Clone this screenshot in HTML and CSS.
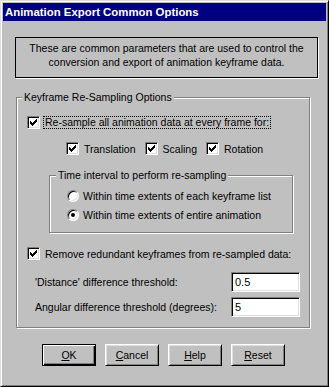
FILE: index.html
```html
<!DOCTYPE html>
<html lang="en">
<head>
    <meta charset="UTF-8">
    <title>Animation Export Common Options</title>
    <link rel="stylesheet" href="styles.css">
</head>
<body>
    <div class="window">
        <div class="titlebar">Animation Export Common Options</div>

        <div class="content">
            <div class="info">
                These are common parameters that are used to control the<br>
                conversion and export of animation keyframe data.
            </div>

            <fieldset class="group outer">
                <legend>Keyframe Re-Sampling Options</legend>

                <label class="check-row resample">
                    <span class="box"><svg width="7" height="7" viewBox="0 0 7 7" shape-rendering="crispEdges"><path d="M0 2h1v3h-1zM1 3h1v3h-1zM2 4h1v3h-1zM3 3h1v3h-1zM4 2h1v3h-1zM5 1h1v3h-1zM6 0h1v3h-1z"/></svg></span>
                    <span class="focus">Re-sample all animation data at every frame for:</span>
                </label>

                <div class="channels">
                    <label class="check-row">
                        <span class="box"><svg width="7" height="7" viewBox="0 0 7 7" shape-rendering="crispEdges"><path d="M0 2h1v3h-1zM1 3h1v3h-1zM2 4h1v3h-1zM3 3h1v3h-1zM4 2h1v3h-1zM5 1h1v3h-1zM6 0h1v3h-1z"/></svg></span>
                        <span>Translation</span>
                    </label>
                    <label class="check-row">
                        <span class="box"><svg width="7" height="7" viewBox="0 0 7 7" shape-rendering="crispEdges"><path d="M0 2h1v3h-1zM1 3h1v3h-1zM2 4h1v3h-1zM3 3h1v3h-1zM4 2h1v3h-1zM5 1h1v3h-1zM6 0h1v3h-1z"/></svg></span>
                        <span>Scaling</span>
                    </label>
                    <label class="check-row">
                        <span class="box"><svg width="7" height="7" viewBox="0 0 7 7" shape-rendering="crispEdges"><path d="M0 2h1v3h-1zM1 3h1v3h-1zM2 4h1v3h-1zM3 3h1v3h-1zM4 2h1v3h-1zM5 1h1v3h-1zM6 0h1v3h-1z"/></svg></span>
                        <span>Rotation</span>
                    </label>
                </div>

                <fieldset class="group interval">
                    <legend>Time interval to perform re-sampling</legend>
                    <label class="radio-row">
                        <span class="radio"></span>
                        <span>Within time extents of each keyframe list</span>
                    </label>
                    <label class="radio-row second">
                        <span class="radio on"></span>
                        <span>Within time extents of entire animation</span>
                    </label>
                </fieldset>

                <label class="check-row remove">
                    <span class="box"><svg width="7" height="7" viewBox="0 0 7 7" shape-rendering="crispEdges"><path d="M0 2h1v3h-1zM1 3h1v3h-1zM2 4h1v3h-1zM3 3h1v3h-1zM4 2h1v3h-1zM5 1h1v3h-1zM6 0h1v3h-1z"/></svg></span>
                    <span>Remove redundant keyframes from re-sampled data:</span>
                </label>

                <div class="field-row distance">
                    <span>'Distance' difference threshold:</span>
                    <span class="textbox">0.5</span>
                </div>
                <div class="field-row angular">
                    <span>Angular difference threshold (degrees):</span>
                    <span class="textbox">5</span>
                </div>
            </fieldset>

            <div class="buttons">
                <button class="btn default"><u>O</u>K</button>
                <button class="btn"><u>C</u>ancel</button>
                <button class="btn"><u>H</u>elp</button>
                <button class="btn"><u>R</u>eset</button>
            </div>
        </div>
    </div>
</body>
</html>
```

FILE: styles.css
```css
body {
    margin: 0;
    background: #c0c0c0;
    font-family: "Liberation Sans", Arial, sans-serif;
    font-size: 10.5px;
    color: #000;
}

.window {
    box-sizing: border-box;
    width: 329px;
    height: 387px;
    padding: 2px;
    background: #c0c0c0;
    border: 1px solid;
    border-color: #dfdfdf #000 #000 #dfdfdf;
    box-shadow: inset 1px 1px 0 #fff, inset -1px -1px 0 #808080;
}

.titlebar {
    height: 18px;
    line-height: 18px;
    padding-left: 2px;
    background: #000080;
    color: #fff;
    font-weight: bold;
    font-size: 11.4px;
    white-space: nowrap;
}

.content {
    padding-top: 16px;
}

.info {
    box-sizing: border-box;
    width: 303px;
    height: 41px;
    margin-left: 12px;
    padding-top: 3px;
    line-height: 14px;
    text-align: center;
    border: 1px solid #000;
    box-shadow: 1px 1px 0 #fff;
}

/* etched group boxes */
.group {
    box-sizing: border-box;
    margin: 0;
    border: 1px solid #808080;
    box-shadow: inset 1px 1px 0 #fff, 1px 1px 0 #fff;
    min-width: 0;
}

.group legend {
    padding: 0 2px;
    line-height: 14px;
    background: #c0c0c0;
}

.outer {
    width: 294px;
    margin: 12px 0 0 13px;
    padding: 11px 9px 10px 10px;
}

.outer > legend {
    margin-left: -5px;
}

.check-row {
    display: flex;
    align-items: center;
    height: 15px;
    white-space: nowrap;
}

.box {
    box-sizing: border-box;
    width: 13px;
    height: 13px;
    flex: none;
    display: flex;
    align-items: center;
    justify-content: center;
    margin-right: 5px;
    background: #fff;
    border: 1px solid;
    border-color: #808080 #fff #fff #808080;
    box-shadow: inset 1px 1px 0 #000, inset -1px -1px 0 #dfdfdf;
}

.box svg {
    display: block;
}

.resample .box {
    margin-right: 3px;
}

.focus {
    padding: 0 1px;
    line-height: 11px;
    border: 1px dotted #000;
}

.channels {
    display: flex;
    gap: 9px;
    margin: 11px 0 0 39px;
}

.interval {
    width: 244px;
    margin: 12px 0 0 22px;
    padding: 8px 6px 11px 17px;
}

.interval > legend {
    margin-left: -11px;
}

.radio-row {
    display: flex;
    align-items: center;
    height: 12px;
    white-space: nowrap;
}

.radio-row.second {
    margin-top: 7px;
}

.radio {
    box-sizing: border-box;
    width: 12px;
    height: 12px;
    flex: none;
    display: flex;
    align-items: center;
    justify-content: center;
    margin-right: 4px;
    border-radius: 50%;
    background: #fff;
    border: 1px solid;
    border-color: #808080 #fff #fff #808080;
    box-shadow: inset 1px 1px 0 #000, inset -1px -1px 0 #dfdfdf;
}

.radio.on::after {
    content: "";
    width: 4px;
    height: 4px;
    border-radius: 50%;
    background: #000;
}

.remove {
    margin-top: 13px;
}

.field-row {
    display: flex;
    align-items: center;
    justify-content: space-between;
    height: 20px;
    margin-left: 8px;
}

.distance {
    margin-top: 11px;
}

.angular {
    margin-top: 5px;
}

.textbox {
    box-sizing: border-box;
    width: 69px;
    height: 20px;
    padding: 3px 0 0 3px;
    line-height: 13px;
    font-size: 11px;
    background: #fff;
    border: 1px solid;
    border-color: #808080 #fff #fff #808080;
    box-shadow: inset 1px 1px 0 #000, inset -1px -1px 0 #dfdfdf;
}

.buttons {
    display: flex;
    gap: 9px;
    margin-top: 16px;
    padding-left: 39px;
}

.btn {
    box-sizing: border-box;
    width: 54px;
    height: 22px;
    padding: 0;
    font-family: "Liberation Sans", Arial, sans-serif;
    font-size: 10.5px;
    color: #000;
    background: #c0c0c0;
    border: 1px solid;
    border-color: #fff #000 #000 #fff;
    box-shadow: inset 1px 1px 0 #dfdfdf, inset -1px -1px 0 #808080;
}

.btn.default {
    border-color: #000;
    box-shadow: inset 1px 1px 0 #fff, inset -1px -1px 0 #000, inset -2px -2px 0 #808080;
}
```
